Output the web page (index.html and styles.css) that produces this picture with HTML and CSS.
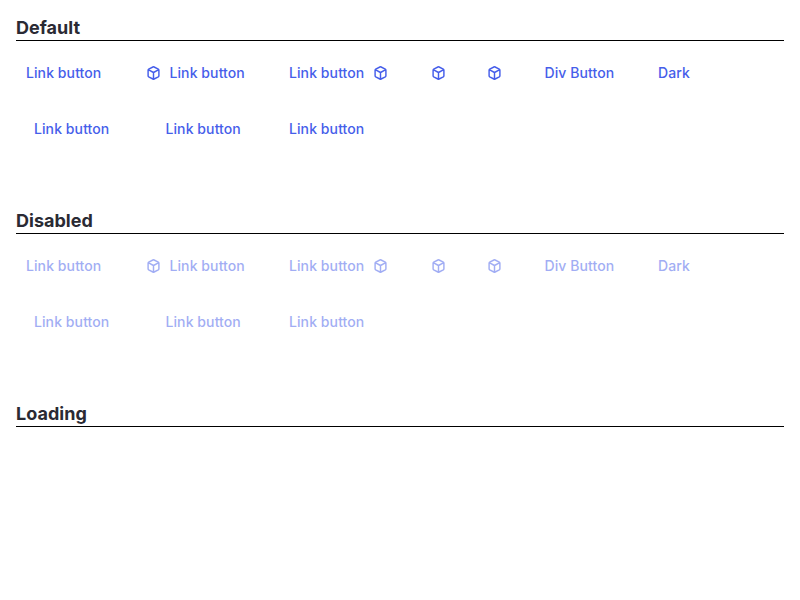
FILE: index.html
```html
<!DOCTYPE html>
<html lang="en">
<head>
<meta charset="utf-8">
<title>Link buttons</title>
<link rel="stylesheet" href="styles.css">
</head>
<body>
<svg class="sprite" aria-hidden="true">
  <symbol id="cube" viewBox="0 0 13 14">
    <path d="M5.9 1 1.7 3.2Q1.1 3.6 1.1 4.3V9.7Q1.1 10.4 1.7 10.8L5.9 13Q6.5 13.3 7.1 13L11.3 10.8Q11.9 10.4 11.9 9.7V4.3Q11.9 3.6 11.3 3.2L7.1 1Q6.5 .7 5.9 1ZM1.7 3.9 6.5 6.5 11.3 3.9M6.5 6.5V12.8"/>
  </symbol>
</svg>
<section class="group">
  <h2 class="heading">Default</h2>
  <div class="row">
    <button class="btn w-a">Link button</button>
    <button class="btn w-b"><svg class="icon"><use href="#cube"/></svg>Link button</button>
    <button class="btn w-c">Link button<svg class="icon"><use href="#cube"/></svg></button>
    <button class="btn w-icon" aria-label="Cube"><svg class="icon"><use href="#cube"/></svg></button>
    <button class="btn w-icon" aria-label="Cube"><svg class="icon"><use href="#cube"/></svg></button>
    <div class="btn w-d">Div Button</div>
    <button class="btn w-e">Dark</button>
  </div>
  <div class="row">
    <button class="btn w-f">Link button</button>
    <button class="btn w-g">Link button</button>
    <button class="btn w-h">Link button</button>
  </div>
</section>
<section class="group disabled">
  <h2 class="heading">Disabled</h2>
  <div class="row">
    <button class="btn w-a" disabled>Link button</button>
    <button class="btn w-b" disabled><svg class="icon"><use href="#cube"/></svg>Link button</button>
    <button class="btn w-c" disabled>Link button<svg class="icon"><use href="#cube"/></svg></button>
    <button class="btn w-icon" disabled aria-label="Cube"><svg class="icon"><use href="#cube"/></svg></button>
    <button class="btn w-icon" disabled aria-label="Cube"><svg class="icon"><use href="#cube"/></svg></button>
    <div class="btn w-d">Div Button</div>
    <button class="btn w-e" disabled>Dark</button>
  </div>
  <div class="row">
    <button class="btn w-f" disabled>Link button</button>
    <button class="btn w-g" disabled>Link button</button>
    <button class="btn w-h" disabled>Link button</button>
  </div>
</section>
<section class="group">
  <h2 class="heading">Loading</h2>
</section>
</body>
</html>
```

FILE: styles.css
```css
* { box-sizing: border-box; }
body {
  margin: 0;
  padding: 16px;
  background: #fff;
  font-family: Inter, sans-serif;
}
.sprite { position: absolute; width: 0; height: 0; }
.group { height: 193px; }
.heading {
  margin: 0 0 12px;
  height: 25px;
  border-bottom: 1px solid #000;
  color: #2a2a33;
  font-size: 18px;
  font-weight: 700;
  line-height: 24px;
  letter-spacing: 0.02px;
}
.row {
  display: flex;
  height: 40px;
  margin-bottom: 16px;
}
.btn {
  display: flex;
  flex: none;
  align-items: center;
  gap: 9.5px;
  height: 40px;
  margin: 0;
  padding: 0 0 0 10px;
  border: 0;
  background: none;
  color: #465eea;
  font: 500 14px/20px Inter, sans-serif;
  letter-spacing: 0.09px;
  white-space: nowrap;
}
.icon {
  flex: none;
  width: 13px;
  height: 14px;
  fill: none;
  stroke: currentColor;
  stroke-width: 1.45;
  stroke-linejoin: round;
  stroke-linecap: round;
}
.w-a { width: 121px; }
.w-b { width: 142px; }
.w-c { width: 143px; }
.w-icon { width: 56px; }
.w-d { width: 113.5px; margin-left: 0.5px; }
.w-e { width: 60px; }
.w-f { width: 132px; padding-left: 18px; }
.w-g { width: 131px; padding-left: 17.5px; }
.w-h { width: 120px; }
.disabled .btn { opacity: .5; }
```
